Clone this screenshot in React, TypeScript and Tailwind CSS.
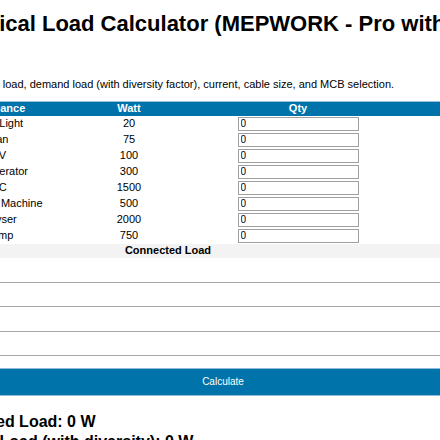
import React from "react";

const items: [string, number][] = [
  ["LED Light", 20],
  ["Fan", 75],
  ["TV", 100],
  ["Refrigerator", 300],
  ["AC", 1500],
  ["Washing Machine", 500],
  ["Geyser", 2000],
  ["Pump", 750],
];

export default function App() {
  return (
    <div
      className="w-[440px] h-[440px] overflow-hidden bg-white text-black"
      style={{ fontFamily: '"Liberation Sans", Arial, sans-serif' }}
    >
      <div className="-ml-[62px] w-[570px]">
        <h2 className="pt-[11px] text-[22px] leading-[26px] font-bold whitespace-nowrap">
          Electrical Load Calculator (MEPWORK - Pro with Diversity)
        </h2>
        <p className="mt-[41px] -ml-[8px] text-[11px] leading-[13px] whitespace-nowrap">
          Calculate total load, demand load (with diversity factor), current, cable size, and MCB selection.
        </p>
        <table className="mt-[10px] w-full border-collapse text-[11px] leading-[13px] table-fixed">
          <colgroup>
            <col className="w-[122px]" />
            <col className="w-[138px]" />
            <col className="w-[200px]" />
            <col />
          </colgroup>
          <thead>
            <tr className="bg-[#0073aa] text-white h-[14px] border-t border-[#9cc3dc]">
              <th className="p-0 font-bold text-center">Appliance</th>
              <th className="p-0 font-bold text-center">Watt</th>
              <th className="p-0 font-bold text-center">Qty</th>
              <th className="p-0 font-bold text-center"></th>
            </tr>
          </thead>
          <tbody>
            {items.map(([name, w]) => (
              <tr key={name} className="h-[16px]">
                <td className="p-0 text-center">{name}</td>
                <td className="p-0 text-center">{w}</td>
                <td className="p-0 text-center">
                  <input
                    type="text"
                    defaultValue="0"
                    className="block mx-auto w-[121px] h-[14px] border border-[#a0a0a0] px-[2px] text-[10px] leading-[12px] text-black bg-white"
                    style={{ fontFamily: '"Liberation Sans", Arial, sans-serif' }}
                  />
                </td>
                <td className="p-0 text-center"></td>
              </tr>
            ))}
            <tr className="bg-[#f3f3f3] h-[14px]">
              <td colSpan={3} className="p-0 text-center font-bold">
                Connected Load
              </td>
              <td className="p-0"></td>
            </tr>
          </tbody>
        </table>
        <div className="h-[25px] border-b border-[#a8a8a8]" />
        <div className="h-[24px] border-b border-[#a8a8a8]" />
        <div className="h-[25px] border-b border-[#a8a8a8]" />
        <div className="h-[24px] border-b border-[#a8a8a8]" />
        <button className="mt-[12px] block w-full h-[28px] bg-[#0073aa] border-y border-[#8dbbd9] text-white text-[10px] leading-[26px] text-center">
          Calculate
        </button>
        <h3 className="mt-[16px] -ml-[6px] text-[16px] leading-[20px] font-bold whitespace-nowrap">
          Connected Load: 0 W
        </h3>
        <h3 className="mt-[0px] -ml-[6px] text-[16px] leading-[20px] font-bold whitespace-nowrap">
          Demand Load (with diversity): 0 W
        </h3>
      </div>
    </div>
  );
}
